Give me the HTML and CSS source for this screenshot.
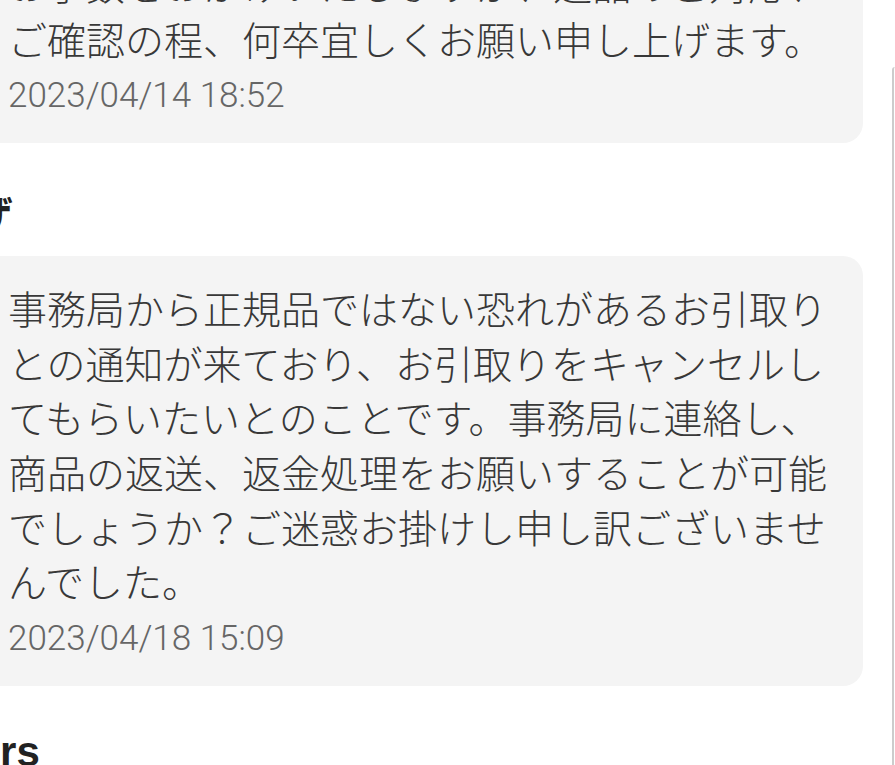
FILE: index.html
```html
<!DOCTYPE html>
<html lang="ja">
<head>
<meta charset="utf-8">
<title>メッセージ</title>
<link rel="stylesheet" href="styles.css">
</head>
<body>
<div class="page">
  <main class="chat">
    <section class="msg msg-first">
      <div class="bubble">
        <p class="text">お手数をおかけいたしますが、返品のご対応、<br>ご確認の程、何卒宜しくお願い申し上げます。</p>
        <div class="time">2023/04/14 18:52</div>
      </div>
    </section>
    <section class="msg">
      <div class="name">ユーザ</div>
      <div class="bubble">
        <p class="text">事務局から正規品ではない恐れがあるお引取りとの通知が来ており、お引取りをキャンセルしてもらいたいとのことです。事務局に連絡し、商品の返送、返金処理をお願いすることが可能でしょうか？ご迷惑お掛けし申し訳ございませんでした。</p>
        <div class="time">2023/04/18 15:09</div>
      </div>
    </section>
    <section class="msg">
      <div class="name name-latin">Traders</div>
    </section>
  </main>
  <aside class="rail"></aside>
</div>
</body>
</html>
```

FILE: styles.css
```css
html, body {
  margin: 0;
  padding: 0;
  background: #ffffff;
  overflow: hidden;
}

body {
  width: 895px;
  height: 765px;
  font-family: "Noto Sans CJK JP", "Liberation Sans", sans-serif;
  color: #333333;
}

.page {
  display: flex;
  height: 765px;
  overflow: hidden;
}

.chat {
  width: 892px;
  flex: none;
  display: flex;
  flex-direction: column;
  overflow: hidden;
}

.msg {
  display: flex;
  flex-direction: column;
  margin-top: 42px;
}

.msg-first {
  margin-top: -68px;
}

.name {
  font-family: "Noto Sans CJK JP", sans-serif;
  font-weight: 700;
  font-size: 42px;
  line-height: 55px;
  margin-left: -112px;
  margin-bottom: 16px;
  color: #222222;
  white-space: nowrap;
}

.name-latin {
  font-family: "Liberation Sans", "Noto Sans CJK JP", sans-serif;
  margin-top: -4px;
}

.bubble {
  margin-left: -18px;
  width: 881px;
  box-sizing: border-box;
  padding: 24px 18px 24px 26px;
  background: #f4f4f4;
  border-radius: 20px;
}

.text {
  margin: 0;
  font-size: 39px;
  line-height: 54.6px;
  font-weight: 300;
  color: #383838;
  line-break: normal;
}

.time {
  margin-top: 8px;
  font-family: Roboto, "Liberation Sans", sans-serif;
  font-size: 35px;
  font-weight: 300;
  line-height: 46px;
  color: #666666;
}

.rail {
  flex: 1;
  margin-top: 67px;
  border-left: 2px solid #cccccc;
  border-top-left-radius: 3px;
}
```
